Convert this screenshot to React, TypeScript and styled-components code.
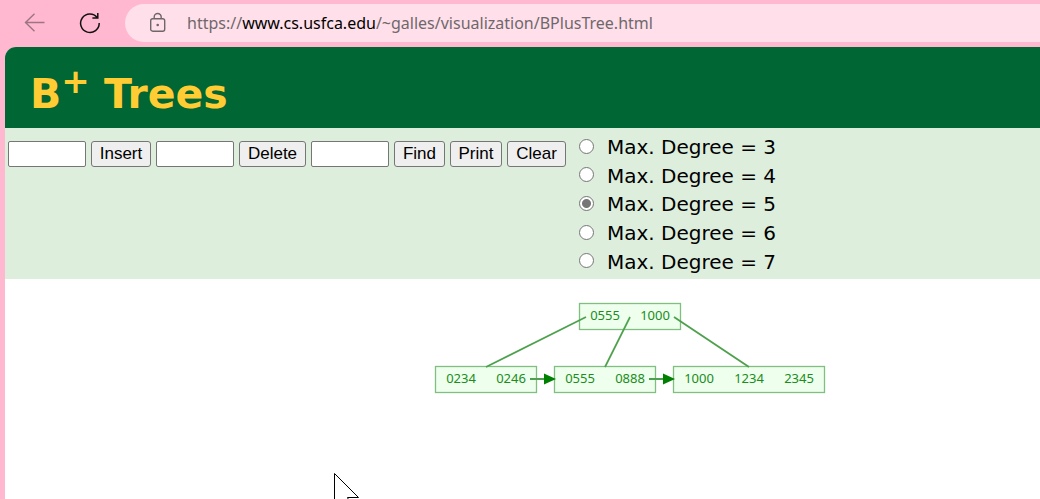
import React, { useState } from "react";
import styled, { createGlobalStyle } from "styled-components";

const GlobalStyle = createGlobalStyle`
  * { box-sizing: border-box; }
  body { margin: 0; background: #ffb8d0; }
`;

const Browser = styled.div`
  display: flex;
  flex-direction: column;
  height: 100vh;
  overflow: hidden;
  background: #ffb8d0;
`;

const Toolbar = styled.nav`
  display: flex;
  align-items: center;
  flex: none;
  gap: 32px;
  padding: 4px 0 5px 24px;
`;

const NavButton = styled.button<{ $faded?: boolean }>`
  display: flex;
  width: 22px;
  height: 22px;
  padding: 0;
  border: 0;
  background: none;
  color: ${(p) => (p.$faded ? "#9c7483" : "#111")};
`;

const AddressBar = styled.div`
  display: flex;
  flex: 1;
  align-items: center;
  gap: 20px;
  height: 38px;
  margin-left: -7px;
  padding-left: 24px;
  border-radius: 19px 0 0 19px;
  background: #ffe0ea;
`;

const Address = styled.span`
  color: #6f686b;
  font: 16px/24px "Noto Sans", "Open Sans", sans-serif;
  white-space: nowrap;
`;

const Host = styled.span`
  color: #000;
`;

const Page = styled.main`
  display: flex;
  flex: 1;
  flex-direction: column;
  margin-left: 5px;
  overflow: hidden;
  border-radius: 11px 0 0 0;
  background: #fff;
  font-family: Verdana, "DejaVu Sans", sans-serif;
`;

const Header = styled.header`
  padding: 23px 25px 10px;
  background: #006633;
`;

const Title = styled.h1`
  margin: 0;
  color: #ffcc33;
  font-size: 41px;
  font-weight: bold;
  line-height: 48px;

  sup {
    font-size: 34px;
    line-height: 0;
  }
`;

const Controls = styled.form`
  display: flex;
  align-items: flex-start;
  gap: 13px;
  padding: 5px 3px 3px;
  background: #ddeedd;
`;

const Actions = styled.div`
  display: flex;
  gap: 5px;
  padding-top: 8px;
`;

const KeyInput = styled.input`
  width: 78px;
  height: 26px;
  padding: 1px 4px;
  border: 1px solid #767676;
  border-radius: 2px;
  background: #fff;
  font: 17px "Liberation Sans", Arial, sans-serif;
`;

const ActionButton = styled.button<{ $width: number }>`
  width: ${(p) => p.$width}px;
  height: 26px;
  padding: 0;
  border: 1px solid #767676;
  border-radius: 3px;
  background: #efefef;
  color: #000;
  font: 17px/22px "Liberation Sans", Arial, sans-serif;
`;

const Degrees = styled.fieldset`
  display: grid;
  grid-template-rows: repeat(5, 1fr);
  height: 143px;
  margin: 0;
  padding: 0;
  border: 0;
`;

const Degree = styled.label`
  display: flex;
  align-items: center;
  gap: 13px;
  font-size: 20px;
  line-height: 28px;
  white-space: nowrap;
`;

const Radio = styled.input`
  appearance: none;
  width: 15px;
  height: 15px;
  margin: 0 0 2px;
  border: 1px solid #767676;
  border-radius: 50%;
  background: #fff;

  &:checked {
    background: radial-gradient(circle, #767676 4px, #fff 5px);
  }
`;

const Canvas = styled.section`
  position: relative;
  flex: 1;
  overflow: hidden;
  background: #fff;
`;

const Drawing = styled.svg`
  display: block;
  font: 13px "Noto Sans", "Open Sans", sans-serif;
`;

const Pointer = styled.svg`
  position: absolute;
  left: 329px;
  top: 194px;
`;

type TreeNode = { x: number; y: number; width: number; keys: [string, number][] };

const nodes: TreeNode[] = [
  { x: 574, y: 24, width: 102, keys: [["0555", 600], ["1000", 650]] },
  { x: 430, y: 87, width: 102, keys: [["0234", 456], ["0246", 506]] },
  { x: 549, y: 87, width: 102, keys: [["0555", 575], ["0888", 625]] },
  { x: 668, y: 87, width: 152, keys: [["1000", 694], ["1234", 744], ["2345", 794]] },
];

const edges = ["M581 38L481 88", "M625 38L600 88", "M669 38L744 88"];
const links = [
  { from: 525, to: 551 },
  { from: 644, to: 670 },
];

function Tree() {
  return (
    <Drawing width="830" height="120" role="img" aria-label="B+ tree">
      {nodes.map((n) => (
        <g key={n.x}>
          <rect x={n.x + 0.5} y={n.y + 0.5} width={n.width - 1} height="26" fill="#eeffee" stroke="#80bf80" strokeWidth="1.3" />
          {n.keys.map(([label, x]) => (
            <text key={label} x={x} y={n.y + 17} textAnchor="middle" fill="#208c20">
              {label}
            </text>
          ))}
        </g>
      ))}
      {edges.map((d) => (
        <path key={d} d={d} stroke="#4da04d" strokeWidth="1.7" />
      ))}
      {links.map(({ from, to }) => (
        <g key={from}>
          <path d={`M${from} 100H${to - 9}`} stroke="#4da04d" strokeWidth="2" />
          <path d={`M${to - 12} 94.5L${to} 100L${to - 12} 105.5Z`} fill="#008000" />
        </g>
      ))}
    </Drawing>
  );
}

export default function App() {
  const [degree, setDegree] = useState(5);
  return (
    <Browser>
      <GlobalStyle />
      <Toolbar aria-label="Browser">
        <NavButton $faded aria-label="Back">
          <svg width="22" height="22" fill="none" stroke="currentColor" strokeWidth="1.4">
            <path d="M20.5 10.5H1.5M10.5 1.8L1.5 10.5L10.5 19.2" />
          </svg>
        </NavButton>
        <NavButton aria-label="Reload">
          <svg width="22" height="22" fill="none" stroke="currentColor" strokeWidth="1.5">
            <path d="M19.3 5.6A9.3 9.3 0 1 0 21.2 11M19.8 1V6H14.4" />
          </svg>
        </NavButton>
        <AddressBar>
          <svg width="18" height="22" fill="none" stroke="#6f666a" strokeWidth="1.4" aria-hidden="true">
            <rect x="1.7" y="6.7" width="14" height="12.5" rx="2" />
            <path d="M5.2 6.7V5a3.5 3.5 0 0 1 7 0V6.7" />
            <circle cx="8.7" cy="13" r="1.3" fill="#6f666a" stroke="none" />
          </svg>
          <Address>
            https://<Host>www.cs.usfca.edu</Host>/~galles/visualization/BPlusTree.html
          </Address>
        </AddressBar>
      </Toolbar>
      <Page>
        <Header>
          <Title>
            B<sup>+</sup> Trees
          </Title>
        </Header>
        <Controls onSubmit={(e) => e.preventDefault()}>
          <Actions>
            <KeyInput aria-label="Key to insert" />
            <ActionButton type="button" $width={60}>Insert</ActionButton>
            <KeyInput aria-label="Key to delete" />
            <ActionButton type="button" $width={67}>Delete</ActionButton>
            <KeyInput aria-label="Key to find" />
            <ActionButton type="button" $width={51}>Find</ActionButton>
            <ActionButton type="button" $width={52}>Print</ActionButton>
            <ActionButton type="button" $width={59}>Clear</ActionButton>
          </Actions>
          <Degrees aria-label="Maximum degree">
            {[3, 4, 5, 6, 7].map((n) => (
              <Degree key={n}>
                <Radio type="radio" name="degree" checked={degree === n} onChange={() => setDegree(n)} />
                Max. Degree = {n}
              </Degree>
            ))}
          </Degrees>
        </Controls>
        <Canvas>
          <Tree />
          <Pointer width="28" height="42" aria-hidden="true">
            <path d="M.5.5V35.5L8.5 27.5L14 40L19 38L13.5 24.5H24.5Z" fill="#fff" stroke="#000" />
          </Pointer>
        </Canvas>
      </Page>
    </Browser>
  );
}
